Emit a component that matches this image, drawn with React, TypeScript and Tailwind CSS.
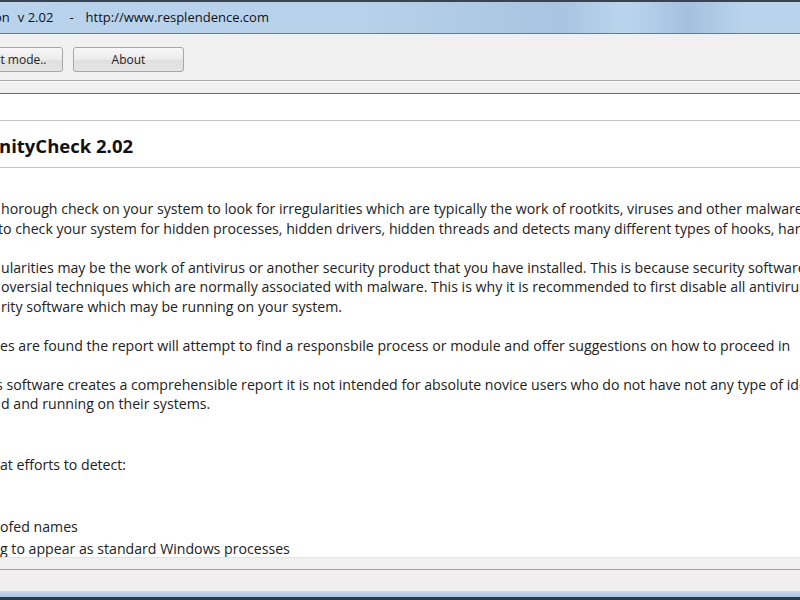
import React from "react";

const body = "font-['Open_Sans','Noto_Sans',sans-serif]";

function Line({ children, className = "" }: { children: React.ReactNode; className?: string }) {
  return <div className={`whitespace-nowrap ${className}`}>{children}</div>;
}

export default function App() {
  return (
    <div className={`w-[800px] h-[600px] overflow-hidden flex flex-col bg-white text-[#1e1e1e] ${body}`}>
      {/* window top edge */}
      <div className="h-[2px] bg-[#3a4352] shrink-0" />
      {/* title bar */}
      <div className="h-[31px] shrink-0 flex items-center text-[13px] text-[#111] bg-[linear-gradient(90deg,#bad3ec_0%,#b8d1ea_45%,#a7c4e0_70%,#bbd5ee_78%,#a3c1de_86%,#b9d3ec_93%,#bad3ec_100%)] whitespace-nowrap">
        <span className="ml-[-6px]">on</span>
        <span className="ml-[8px]">v 2.02</span>
        <span className="ml-[16px]">-</span>
        <span className="ml-[12px]">http://www.resplendence.com</span>
      </div>
      <div className="h-px bg-[#6a7a8e] shrink-0" />
      {/* toolbar */}
      <div className="h-[46px] shrink-0 bg-[#f0f0f0] flex items-start pt-[13px] gap-[10px]">
        <button className="ml-[-48px] w-[111px] h-[25px] shrink-0 rounded-[3px] border border-[#a7a7a7] bg-[linear-gradient(#f7f7f7,#ebebeb_50%,#dfdfdf_51%,#e4e4e4)] text-[12px] text-[#1e1e1e] leading-none flex items-center justify-center whitespace-nowrap">
          Expert mode..
        </button>
        <button className="w-[111px] h-[25px] shrink-0 rounded-[3px] border border-[#a7a7a7] bg-[linear-gradient(#f7f7f7,#ebebeb_50%,#dfdfdf_51%,#e4e4e4)] text-[12px] text-[#1e1e1e] leading-none flex items-center justify-center">
          About
        </button>
      </div>
      <div className="h-px bg-[#a9a9a9] shrink-0" />
      <div className="h-[12px] bg-[#f0f0f0] shrink-0 border-t border-[#fafafa]" />
      <div className="h-px bg-[#6e6e6e] shrink-0" />
      {/* white content area */}
      <div className="h-[463px] shrink-0 overflow-hidden bg-white">
        <div className="h-[26px]" />
        <div className="h-px bg-[#c4c4c4]" />
        <div className="h-[46px] flex items-center">
          <span className="text-[18.5px] font-bold text-[#111] whitespace-nowrap ml-[-1px] mt-[3px]">nityCheck 2.02</span>
        </div>
        <div className="h-px bg-[#c4c4c4]" />
        <div className="pt-[31px] text-[14.15px] leading-[19.5px] text-[#222]">
          <Line className="pl-[1px]">horough check on your system to look for irregularities which are typically the work of rootkits, viruses and other malware. It is</Line>
          <Line className="ml-[-2px]">to check your system for hidden processes, hidden drivers, hidden threads and detects many different types of hooks, hardware</Line>
          <Line className="mt-[19.5px] pl-[1px]">ularities may be the work of antivirus or another security product that you have installed. This is because security software</Line>
          <Line className="pl-[1px]">oversial techniques which are normally associated with malware. This is why it is recommended to first disable all antivirus</Line>
          <Line className="pl-[1px]">rity software which may be running on your system.</Line>
          <Line className="mt-[19.5px]">es are found the report will attempt to find a responsbile process or module and offer suggestions on how to proceed in</Line>
          <Line className="mt-[19.5px] ml-[-4px]">s software creates a comprehensible report it is not intended for absolute novice users who do not have not any type of idea</Line>
          <Line className="pl-[1px]">d and running on their systems.</Line>
          <Line className="mt-[41px]">at efforts to detect:</Line>
          <div className="mt-[42px] leading-[22px]">
            <Line>ofed names</Line>
            <Line>g to appear as standard Windows processes</Line>
          </div>
        </div>
      </div>
      {/* bottom area */}
      <div className="h-px bg-[#e4e4e4] shrink-0" />
      <div className="h-[11px] bg-[#f0f0f0] shrink-0" />
      <div className="h-px bg-[#a2a2a2] shrink-0" />
      <div className="h-[21px] bg-[#f0eeee] shrink-0" />
      <div className="h-[6px] bg-[linear-gradient(#c4d8ec,#a9c5e0)] shrink-0" />
      <div className="flex-1 bg-[#2e3644]" />
    </div>
  );
}
